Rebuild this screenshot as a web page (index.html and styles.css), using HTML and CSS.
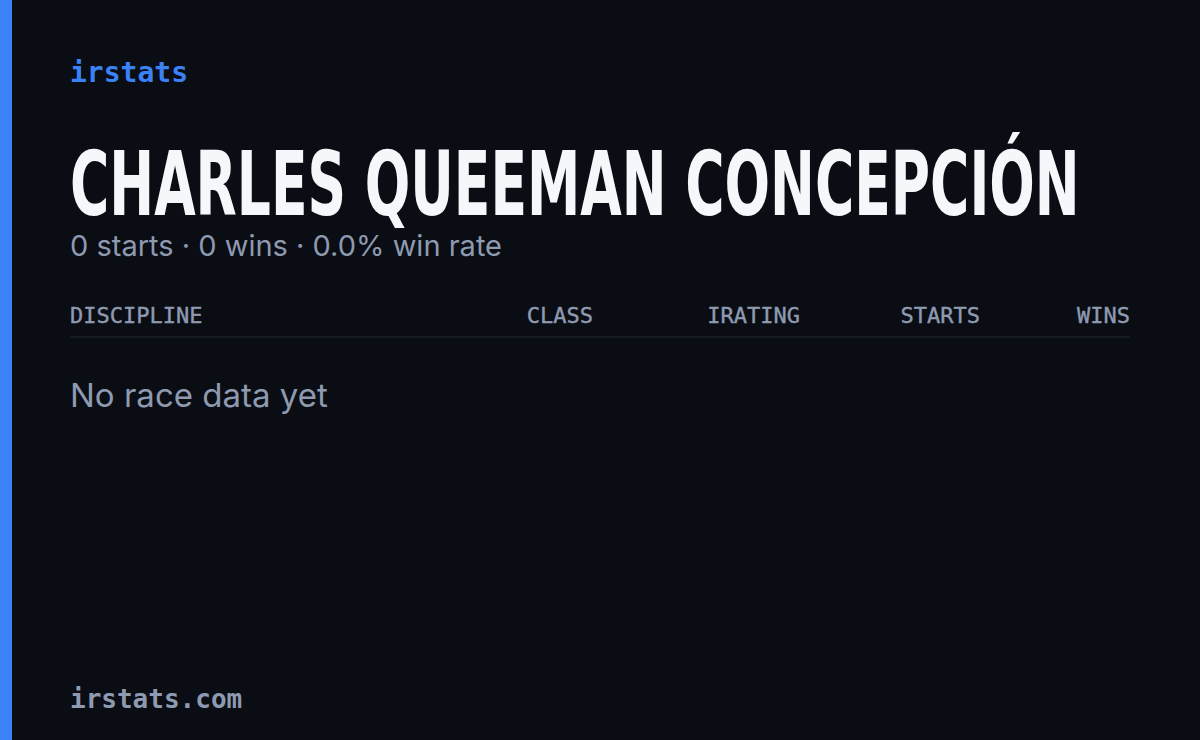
FILE: index.html
```html
<!DOCTYPE html>
<html lang="en">
<head>
  <meta charset="UTF-8" />
  <title>irstats - Charles Queeman Concepción</title>
  <link rel="stylesheet" href="styles.css">
</head>
<body>
  <div class="card">
    <div class="accent"></div>
    <main class="content">
      <div class="brand">irstats</div>
      <h1 class="driver-name">CHARLES QUEEMAN CONCEPCIÓN</h1>
      <div class="summary">0 starts · 0 wins · 0.0% win rate</div>

      <div class="stats-table">
        <div class="row head">
          <div class="col-discipline">DISCIPLINE</div>
          <div class="col-class">CLASS</div>
          <div class="col-irating">IRATING</div>
          <div class="col-starts">STARTS</div>
          <div class="col-wins">WINS</div>
        </div>
      </div>
      <div class="empty">No race data yet</div>

      <div class="footer">irstats.com</div>
    </main>
  </div>
</body>
</html>
```

FILE: styles.css
```css
body {
  margin: 0;
  background-color: #0a0d14;
  font-family: Inter, "Noto Sans", sans-serif;
  overflow: hidden;
}

.card {
  display: flex;
  width: 1200px;
  height: 740px;
}

.accent {
  width: 12px;
  background-color: #3b82f6;
  flex-shrink: 0;
}

.content {
  flex: 1;
  min-width: 0;
  display: flex;
  flex-direction: column;
  padding: 56px 70px 26px 58px;
}

.brand {
  font-family: "DejaVu Sans Mono", monospace;
  font-weight: bold;
  font-size: 28px;
  color: #3b82f6;
  line-height: 34px;
}

.driver-name {
  margin: 56px 0 0 0;
  font-family: "DejaVu Sans Condensed", "DejaVu Sans", sans-serif;
  font-weight: bold;
  font-size: 89px;
  line-height: 76px;
  color: #f6f7fa;
  white-space: nowrap;
  transform: scaleX(0.669);
  transform-origin: left center;
}

.summary {
  margin-top: 9px;
  font-size: 29px;
  line-height: 30px;
  color: #8e9ab0;
}

.stats-table {
  margin-top: 42px;
}

.row {
  display: flex;
  align-items: center;
}

.row.head {
  font-family: "DejaVu Sans Mono", monospace;
  font-size: 22px;
  line-height: 26px;
  color: #8e9ab0;
  -webkit-text-stroke: 0.4px #8e9ab0;
  padding-bottom: 7px;
  border-bottom: 2px solid #161a24;
}

.col-discipline {
  flex: 1;
}

.col-class,
.col-irating,
.col-starts,
.col-wins {
  text-align: right;
}

.col-class { width: 120px; }
.col-irating { width: 207px; }
.col-starts { width: 180px; }
.col-wins { width: 150px; }

.empty {
  margin-top: 37px;
  font-size: 33px;
  line-height: 40px;
  color: #8e9ab0;
}

.footer {
  margin-top: auto;
  font-family: "DejaVu Sans Mono", monospace;
  font-weight: bold;
  font-size: 26px;
  color: #8e9ab0;
}
```
